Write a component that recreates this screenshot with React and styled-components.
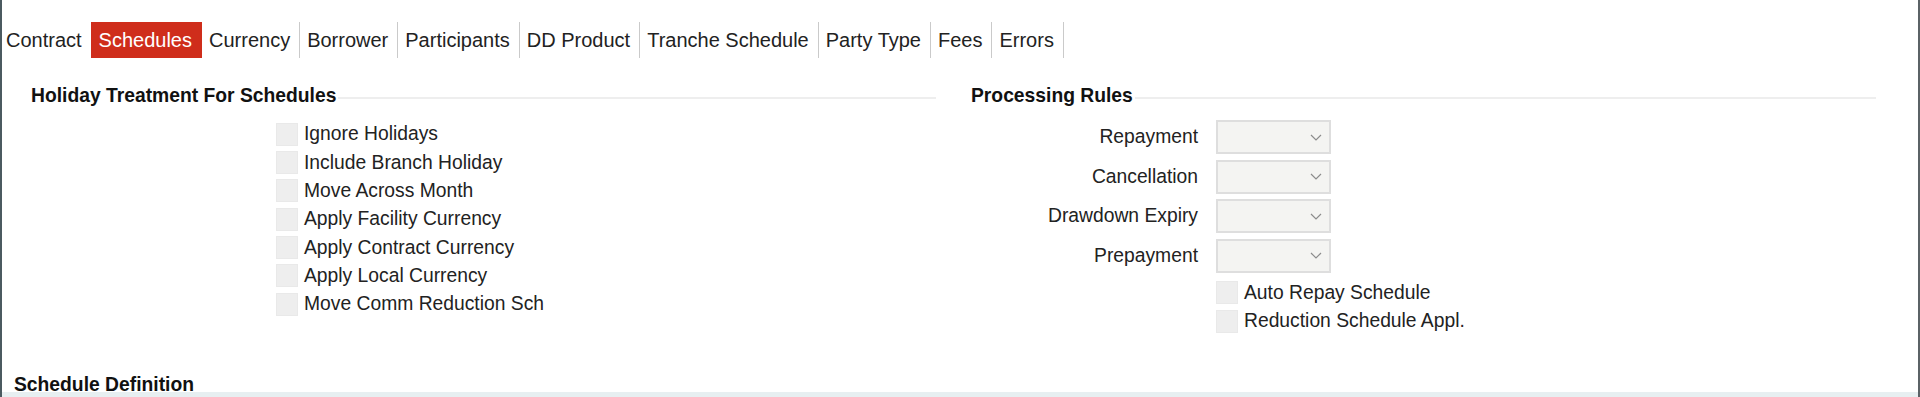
import React from "react";
import styled, { createGlobalStyle } from "styled-components";

const GlobalStyle = createGlobalStyle`
  html, body {
    margin: 0;
    padding: 0;
    background: #ffffff;
  }
  body {
    font-family: "Liberation Sans", Arial, sans-serif;
    color: #222;
  }
`;

const Frame = styled.div`
  height: 397px;
  box-sizing: border-box;
  border-left: 2px solid #4b5a60;
  border-right: 2px solid #5b6266;
  display: flex;
  flex-direction: column;
  overflow: hidden;
  background: #fff;
`;

const TabBar = styled.div`
  display: flex;
  margin-top: 22px;
  height: 36px;
`;

const Tab = styled.div`
  padding: 0 9px 0 ${(p) => (p.$first ? "4px" : "7px")};
  line-height: 36px;
  font-size: 20px;
  color: #222;
  white-space: nowrap;
  border-right: 1px solid ${(p) => (p.$sep ? "#cacaca" : "transparent")};
  cursor: pointer;

  ${(p) =>
    p.$active &&
    `
    background: #cf2d1b;
    color: #fff;
    margin-left: -1px;
    padding-left: 8px;
    border-right-color: #cf2d1b;
  `}
`;

const Main = styled.div`
  padding: 0 42px 0 12px;
`;

const Columns = styled.div`
  display: grid;
  grid-template-columns: 1fr 1fr;
  column-gap: 18px;
  margin-top: 27px;
`;

const Section = styled.section`
  display: flex;
  flex-direction: column;
`;

const SectionTitle = styled.div`
  display: flex;
  align-items: center;
  padding-left: 17px;
  height: 22px;
`;

const Legend = styled.span`
  font-size: 19.3px;
  font-weight: bold;
  line-height: 22px;
  color: #111;
  white-space: nowrap;
`;

const Rule = styled.span`
  flex: 1;
  height: 2px;
  margin-top: 3px;
  margin-left: 2px;
  background: #eeeeee;
`;

const CheckList = styled.div`
  display: flex;
  flex-direction: column;
  margin-top: ${(p) => (p.$flush ? 0 : 13)}px;
  padding-left: ${(p) => p.$indent}px;
`;

const CheckRow = styled.label`
  display: flex;
  align-items: center;
  gap: 6px;
  height: ${(p) => p.$h || 28.36}px;
  font-size: 19.3px;
  color: #222;
  white-space: nowrap;
`;

const Box = styled.span`
  width: 22px;
  height: 23px;
  box-sizing: border-box;
  background: #eeeeee;
  border: 1px solid #e9e9e9;
  flex: none;
`;

const Fields = styled.div`
  display: flex;
  flex-direction: column;
  gap: 5.67px;
  margin-top: 13px;
`;

const SelectRow = styled.div`
  display: grid;
  grid-template-columns: 244px 115px;
  column-gap: 18px;
  align-items: center;
  height: 34px;
`;

const FieldLabel = styled.span`
  text-align: right;
  font-size: 19.3px;
  color: #222;
  white-space: nowrap;
`;

const Select = styled.div`
  height: 34px;
  box-sizing: border-box;
  border: 2px solid #dedede;
  background: #f4f4f2;
  display: flex;
  align-items: center;
  justify-content: flex-end;
  padding-right: 7px;
`;

const SubTitle = styled.div`
  margin-top: 41px;
  font-size: 19.3px;
  font-weight: bold;
  line-height: 15px;
  height: 15px;
  color: #111;
`;

const Band = styled.div`
  flex: 1;
  background: #e7eff1;
`;

const tabs = [
  "Contract",
  "Schedules",
  "Currency",
  "Borrower",
  "Participants",
  "DD Product",
  "Tranche Schedule",
  "Party Type",
  "Fees",
  "Errors",
];

const holidayOptions = [
  "Ignore Holidays",
  "Include Branch Holiday",
  "Move Across Month",
  "Apply Facility Currency",
  "Apply Contract Currency",
  "Apply Local Currency",
  "Move Comm Reduction Sch",
];

const rules = ["Repayment", "Cancellation", "Drawdown Expiry", "Prepayment"];

function Chevron() {
  return (
    <svg width="12" height="7" viewBox="0 0 12 7">
      <polyline points="1,1 6,6 11,1" fill="none" stroke="#8c8c8c" strokeWidth="1.2" />
    </svg>
  );
}

export default function App() {
  const active = "Schedules";
  return (
    <>
      <GlobalStyle />
      <Frame>
        <TabBar>
          {tabs.map((t, i) => {
            const next = tabs[i + 1];
            const isActive = t === active;
            return (
              <Tab
                key={t}
                $first={i === 0}
                $active={isActive}
                $sep={!isActive && next !== active && i > 1}
              >
                {t}
              </Tab>
            );
          })}
        </TabBar>

        <Main>
          <Columns>
            <Section>
              <SectionTitle>
                <Legend>Holiday Treatment For Schedules</Legend>
                <Rule />
              </SectionTitle>
              <CheckList $indent={262}>
                {holidayOptions.map((o) => (
                  <CheckRow key={o}>
                    <Box />
                    {o}
                  </CheckRow>
                ))}
              </CheckList>
            </Section>

            <Section>
              <SectionTitle>
                <Legend>Processing Rules</Legend>
                <Rule />
              </SectionTitle>
              <Fields>
                {rules.map((r) => (
                  <SelectRow key={r}>
                    <FieldLabel>{r}</FieldLabel>
                    <Select>
                      <Chevron />
                    </Select>
                  </SelectRow>
                ))}
                <CheckList $indent={262} $flush>
                  <CheckRow $h={28.5}>
                    <Box />
                    Auto Repay Schedule
                  </CheckRow>
                  <CheckRow $h={28.5}>
                    <Box />
                    Reduction Schedule Appl.
                  </CheckRow>
                </CheckList>
              </Fields>
            </Section>
          </Columns>

          <SubTitle>Schedule Definition</SubTitle>
        </Main>
        <Band />
      </Frame>
    </>
  );
}
